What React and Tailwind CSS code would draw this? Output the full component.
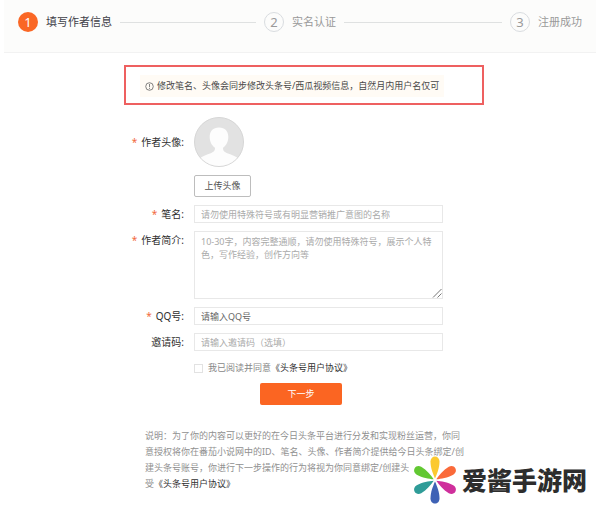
import React from 'react';

const inputClass =
  'block w-full h-[18px] border border-[#e8e8e8] bg-white px-[6px] text-[9px] text-[#505050] outline-none rounded-none';

function Step({ number, title, active, last }) {
  return (
    <li className={last ? 'flex shrink-0 items-center gap-2' : 'flex flex-1 items-center gap-2'}>
      <span
        className={
          active
            ? 'flex size-5 shrink-0 items-center justify-center rounded-full bg-[#fa6725] text-[13px] leading-none text-white'
            : 'flex size-5 shrink-0 items-center justify-center rounded-full border border-[#d9dce0] text-[13px] leading-none text-[#9a9a9a]'
        }
      >
        {number}
      </span>
      <span
        className={
          active
            ? 'text-[11px] whitespace-nowrap text-[#404048]'
            : 'text-[11px] whitespace-nowrap text-[#999999]'
        }
      >
        {title}
      </span>
      {!last && <span aria-hidden="true" className="mr-2 h-px flex-1 bg-[#dfe1e1]" />}
    </li>
  );
}

function Label({ htmlFor, required, children }) {
  return (
    <label htmlFor={htmlFor} className="flex h-[18px] items-center justify-end gap-1 text-[10px] text-[#303030]">
      {required && <span className="text-[#f2693c]">*</span>}
      <span>{children}:</span>
    </label>
  );
}

function Avatar() {
  return (
    <svg viewBox="0 0 50 50" className="size-[50px]" role="img" aria-label="作者头像">
      <defs>
        <clipPath id="avatar-clip">
          <circle cx="25" cy="25" r="24" />
        </clipPath>
      </defs>
      <circle cx="25" cy="25" r="24.5" fill="#e2e2e2" stroke="#d6d6d6" />
      <g clipPath="url(#avatar-clip)">
        <path
          d="M25 10.500c-6 0-9.300 3.800-9.300 9.500 0 5 2.300 8.500 5.300 10.800 0 3 -1 4.200-5 5.700C11 38.300 8 39.500 5 42v9h40v-9c-3-2.500-6-3.700-11-5.500-4-1.500-5-2.700-5-5.700 3-2.300 5.300-5.800 5.300-10.800 0-5.700-3.300-9.500-9.300-9.500z"
          fill="#fdfdfd"
        />
      </g>
    </svg>
  );
}

const petals = [
  [0, '#fbc92f'],
  [60, '#fa6a3a'],
  [120, '#cf2f9c'],
  [180, '#3f62b5'],
  [240, '#2f9c98'],
  [300, '#62c832'],
];

function Flower() {
  return (
    <svg viewBox="-22 -24 44 48" className="h-12 w-11 shrink-0" aria-hidden="true">
      {petals.map(([angle, color]) => (
        <path
          key={angle}
          d="M0 -1.500C-2 -6 -4.500 -12 -4.500 -18.500C-4.500 -21.500 -2.500 -23.500 0 -23.500C2.500 -23.500 4.500 -21.500 4.500 -18.500C4.500 -12 2 -6 0 -1.500Z"
          fill={color}
          transform={`rotate(${angle})`}
        />
      ))}
    </svg>
  );
}

export default function App() {
  return (
    <div
      lang="zh-CN"
      className="relative bg-white pb-3 font-['Noto_Sans','Noto_Sans_CJK_SC',sans-serif] text-[9px] text-[#505050]"
    >
      <header className="mx-1 border-b border-[#f2f2f2] bg-[#fcfcfb] px-[14px] pt-3 pb-5">
        <ol className="flex h-5 items-center">
          <Step number="1" title="填写作者信息" active />
          <Step number="2" title="实名认证" />
          <Step number="3" title="注册成功" last />
        </ol>
      </header>

      <main className="pt-3 pl-2">
        <div className="mx-auto max-w-[360px]">
          <div className="border-2 border-[#ee6060] pt-2 pb-[6px] pl-[14px]">
            <p className="flex h-[22px] w-fit items-center gap-[3px] bg-[#fffbf5] px-[5px] whitespace-nowrap text-[#484848]">
              <svg viewBox="0 0 10 10" className="size-[9px]" fill="none" stroke="#666" strokeWidth="0.9" aria-hidden="true">
                <circle cx="5" cy="5" r="4.200" />
                <path d="M5 2.200v3.600M5 6.800v1" />
              </svg>
              修改笔名、头像会同步修改头条号/西瓜视频信息，自然月内用户名仅可
            </p>
          </div>

          <form
            id="author-form"
            className="mr-[41px] grid grid-cols-[60px_1fr] gap-x-[10px] gap-y-2 pt-3"
            onSubmit={(event) => event.preventDefault()}
          >
            <div className="pt-4">
              <Label htmlFor="avatar" required>作者头像</Label>
            </div>
            <div className="flex flex-col items-start gap-2">
              <Avatar />
              <button
                id="avatar"
                type="button"
                className="h-[22px] w-[57px] rounded-[2px] border border-[#bdbdbd] text-[9px] text-[#505050]"
              >
                上传头像
              </button>
            </div>

            <Label htmlFor="pen-name" required>笔名</Label>
            <input
              id="pen-name"
              className={`${inputClass} placeholder:text-[#aaaaaa]`}
              placeholder="请勿使用特殊符号或有明显营销推广意图的名称"
            />

            <Label htmlFor="intro" required>作者简介</Label>
            <div className="relative">
              <textarea
                id="intro"
                className="block h-[68px] w-full resize-none border border-[#e8e8e8] px-[6px] py-[3px] text-[9px] leading-[13px] outline-none placeholder:text-[#aaaaaa]"
                placeholder="10-30字，内容完整通顺，请勿使用特殊符号，展示个人特色，写作经验，创作方向等"
              />
              <svg viewBox="0 0 10 10" className="absolute right-px bottom-px size-[10px]" stroke="#777" aria-hidden="true">
                <path d="M1 9.500L9.500 1M5.500 9.500L9.500 5.500" />
              </svg>
            </div>

            <Label htmlFor="qq" required>QQ号</Label>
            <input id="qq" className={`${inputClass} placeholder:text-[#666666]`} placeholder="请输入QQ号" />

            <Label htmlFor="invite">邀请码</Label>
            <input
              id="invite"
              className={`${inputClass} placeholder:text-[#aaaaaa]`}
              placeholder="请输入邀请码（选填）"
            />

            <div className="col-start-2 flex h-[18px] items-center text-[#888888]">
              <input
                id="agree"
                type="checkbox"
                className="mr-[5px] size-[9px] appearance-none border border-[#e2e2e2] bg-white checked:bg-[#fa6725]"
              />
              <label htmlFor="agree">我已阅读并同意</label>
              <a href="#agreement" className="text-[#303030]">《头条号用户协议》</a>
            </div>
          </form>

          <div className="flex justify-center pt-[6px] pr-[6px]">
            <button
              type="submit"
              form="author-form"
              className="h-[22px] w-[82px] rounded-[2px] bg-[#fb6522] text-[9px] text-white"
            >
              下一步
            </button>
          </div>

          <p className="mt-[23px] ml-[21px] leading-4 whitespace-nowrap text-[#909090]">
            说明：为了你的内容可以更好的在今日头条平台进行分发和实现粉丝运营，你同
            <br />
            意授权将你在番茄小说网中的ID、笔名、头像、作者简介提供给今日头条绑定/创
            <br />
            建头条号账号，你进行下一步操作的行为将视为你同意绑定/创建头
            <br />
            受
            <a href="#agreement" className="text-[#303030]">《头条号用户协议》</a>
          </p>
        </div>
      </main>

      <div className="absolute right-[13px] bottom-0 flex items-center gap-[5px] bg-white pl-1">
        <Flower />
        <span className="text-[25px] leading-none font-black text-[#2d2d2d]">爱酱手游网</span>
      </div>
    </div>
  );
}
